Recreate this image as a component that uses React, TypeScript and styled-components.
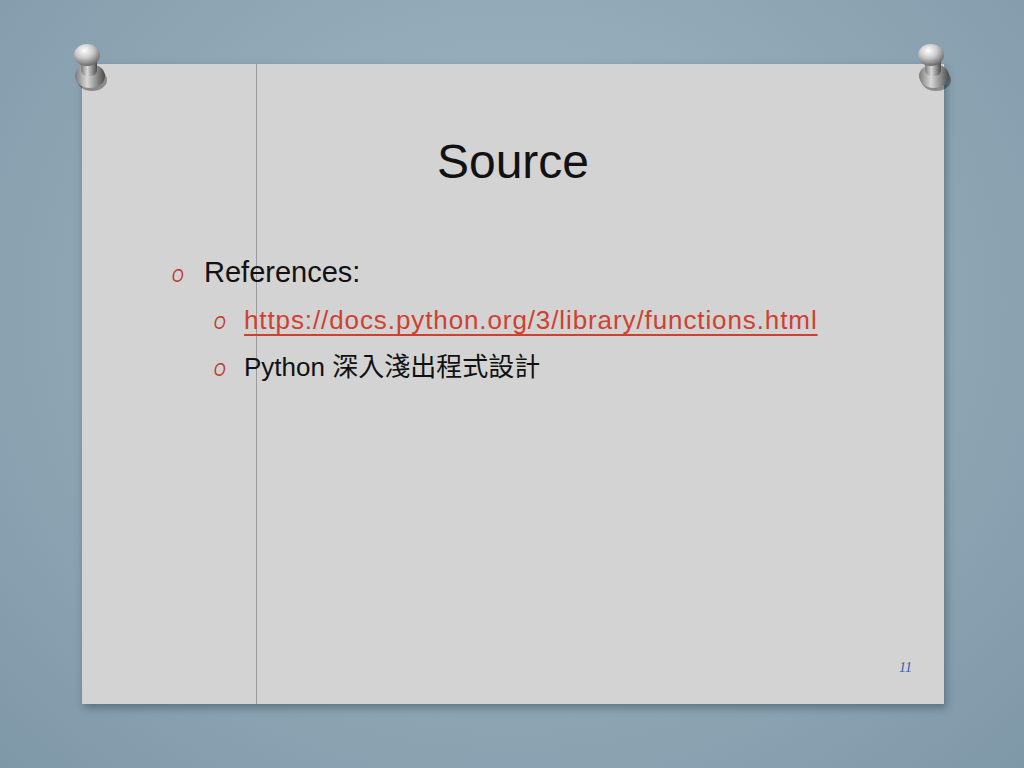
import React from "react";
import styled, { createGlobalStyle } from "styled-components";

const Global = createGlobalStyle`
  html, body { margin: 0; padding: 0; }
  body {
    width: 1024px; height: 768px; overflow: hidden;
    background: radial-gradient(ellipse at 50% 40%, #a3b8c4 0%, #8ea6b4 60%, #7f98a8 100%);
    font-family: "Liberation Sans", Arial, "Noto Sans CJK TC", sans-serif;
  }
`;

const Stage = styled.div`
  position: relative;
  width: 1024px;
  height: 768px;
  padding: 64px 80px 64px 82px;
  box-sizing: border-box;
`;

const Slide = styled.div`
  height: 640px;
  background:
    linear-gradient(to right, transparent 174px, #9a9a9a 174px, #9a9a9a 175px, transparent 175px),
    #d3d3d3;
  box-shadow: 2px 4px 8px rgba(40, 60, 75, 0.45);
  display: flex;
  flex-direction: column;
  padding: 70px 0 0 88px;
  box-sizing: border-box;
  position: relative;
`;

const Title = styled.h1`
  margin: 0 0 0 -88px;
  text-align: center;
  font-weight: 400;
  font-size: 48px;
  color: #111;
`;

const List = styled.ul`
  list-style: none;
  margin: 64px 0 0 0;
  padding: 0;
  display: flex;
  flex-direction: column;
  gap: 6px;
`;

const Item = styled.li<{ $level: number }>`
  display: flex;
  align-items: baseline;
  gap: ${(p) => (p.$level === 1 ? 16 : 14)}px;
  padding-left: ${(p) => (p.$level === 1 ? 0 : 42)}px;
  font-size: ${(p) => (p.$level === 1 ? 29 : 26)}px;
  line-height: 38px;
  color: #111;
`;

const Bullet = styled.span`
  font-family: "Liberation Sans", sans-serif;
  font-style: italic;
  color: #c0392b;
  font-size: 19px;
  flex: none;
  width: 18px;
  transform: scaleX(0.8);
`;

const Link = styled.a`
  color: #d0402f;
  text-decoration: underline;
  text-underline-offset: 5px;
  text-decoration-thickness: 2px;
  width: 590px;
  letter-spacing: 0.9px;
  word-break: break-all;
`;

const PageNum = styled.span`
  position: absolute;
  right: 32px;
  bottom: 28px;
  font-family: "Liberation Serif", serif;
  font-style: italic;
  font-size: 14px;
  color: #3b5bab;
`;

const Pin = styled.div<{ $x: number; $y: number }>`
  position: absolute;
  left: ${(p) => p.$x}px;
  top: ${(p) => p.$y}px;
  width: 40px;
  height: 50px;
`;

const PinSvg = () => (
  <svg width="40" height="50" viewBox="0 0 40 50">
    <defs>
      <radialGradient id="ph" cx="40%" cy="30%" r="70%">
        <stop offset="0" stopColor="#ffffff" />
        <stop offset="0.5" stopColor="#c8c8c8" />
        <stop offset="1" stopColor="#6a6a6a" />
      </radialGradient>
      <linearGradient id="pb" x1="0" x2="1">
        <stop offset="0" stopColor="#7a7a7a" />
        <stop offset="0.4" stopColor="#d8d8d8" />
        <stop offset="1" stopColor="#4a4a4a" />
      </linearGradient>
    </defs>
    <ellipse cx="22" cy="38" rx="15" ry="11" fill="rgba(0,0,0,0.35)" />
    <ellipse cx="20" cy="34" rx="15" ry="12" fill="url(#pb)" />
    <rect x="11" y="14" width="16" height="20" rx="6" fill="url(#pb)" />
    <ellipse cx="17" cy="13" rx="13" ry="11" fill="url(#ph)" />
  </svg>
);

export default function App() {
  return (
    <>
      <Global />
      <Stage>
        <Slide>
          <Title>Source</Title>
          <List>
            <Item $level={1}>
              <Bullet>O</Bullet>
              <span>References:</span>
            </Item>
            <Item $level={2}>
              <Bullet>O</Bullet>
              <Link href="#">https://docs.python.org/3/library/functions.html</Link>
            </Item>
            <Item $level={2}>
              <Bullet>O</Bullet>
              <span>Python 深入淺出程式設計</span>
            </Item>
          </List>
          <PageNum>11</PageNum>
        </Slide>
        <Pin $x={70} $y={42}><PinSvg /></Pin>
        <Pin $x={914} $y={42}><PinSvg /></Pin>
      </Stage>
    </>
  );
}
